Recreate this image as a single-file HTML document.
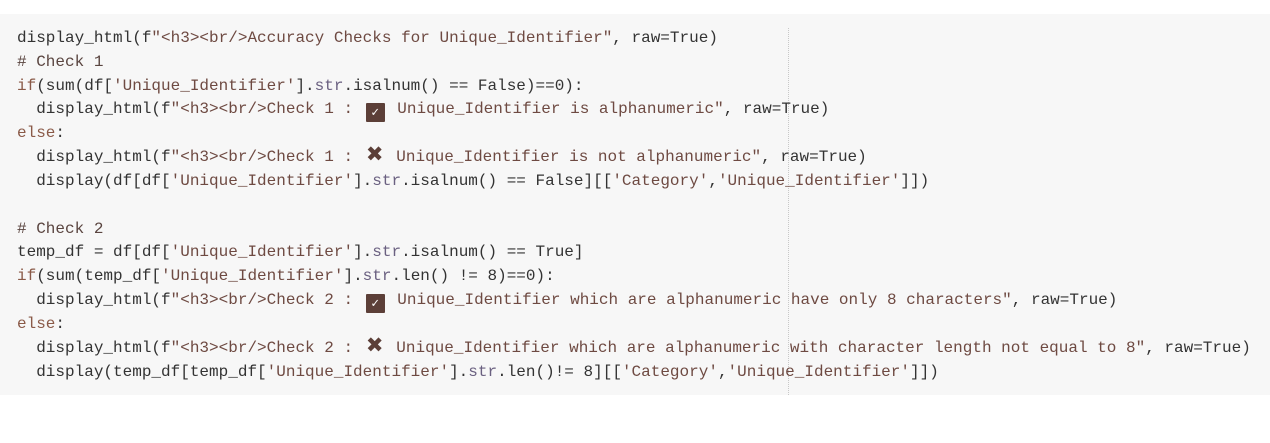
<!DOCTYPE html>
<html><head><meta charset="utf-8"><style>
body{margin:0;width:1270px;height:443px;background:#fff;overflow:hidden;position:relative}
.bg{position:absolute;left:0;top:14px;width:1270px;height:381px;background:#f7f7f7}
.vl{position:absolute;left:788px;top:28px;height:367px;border-left:1px dotted #c8c8c8}
pre{position:absolute;left:17px;top:27px;margin:0;font-family:"Liberation Mono","DejaVu Sans Mono",monospace;font-size:16px;line-height:23.8px;color:#333}
.s{color:#6e4a42}.k{color:#8a5a48}.c{color:#5a4540}.m{color:#6a6080}
.bx{display:inline-block;width:19px;height:19px;background:#5c3f38;color:#fff;font-size:13px;line-height:19px;text-align:center;vertical-align:-3px;border-radius:1px;margin:0 3px 0 3px}
.x{display:inline-block;width:24px;text-align:center;color:#5c3f38;font-weight:bold;font-family:"DejaVu Sans",sans-serif;font-size:21px;line-height:10px}
</style></head><body>
<div class="bg"></div><div class="vl"></div>
<pre>display_html(f<span class="s">"&lt;h3&gt;&lt;br/&gt;Accuracy Checks for Unique_Identifier"</span>, raw=True)
<span class="c"># Check 1</span>
<span class="k">if</span>(sum(df[<span class="s">'Unique_Identifier'</span>].<span class="m">str</span>.isalnum() == False)==0):
  display_html(f<span class="s">"&lt;h3&gt;&lt;br/&gt;Check 1 : <span class="bx">✓</span> Unique_Identifier is alphanumeric"</span>, raw=True)
<span class="k">else</span>:
  display_html(f<span class="s">"&lt;h3&gt;&lt;br/&gt;Check 1 : <span class="x">✖</span> Unique_Identifier is not alphanumeric"</span>, raw=True)
  display(df[df[<span class="s">'Unique_Identifier'</span>].<span class="m">str</span>.isalnum() == False][[<span class="s">'Category'</span>,<span class="s">'Unique_Identifier'</span>]])

<span class="c"># Check 2</span>
temp_df = df[df[<span class="s">'Unique_Identifier'</span>].<span class="m">str</span>.isalnum() == True]
<span class="k">if</span>(sum(temp_df[<span class="s">'Unique_Identifier'</span>].<span class="m">str</span>.len() != 8)==0):
  display_html(f<span class="s">"&lt;h3&gt;&lt;br/&gt;Check 2 : <span class="bx">✓</span> Unique_Identifier which are alphanumeric have only 8 characters"</span>, raw=True)
<span class="k">else</span>:
  display_html(f<span class="s">"&lt;h3&gt;&lt;br/&gt;Check 2 : <span class="x">✖</span> Unique_Identifier which are alphanumeric with character length not equal to 8"</span>, raw=True)
  display(temp_df[temp_df[<span class="s">'Unique_Identifier'</span>].<span class="m">str</span>.len()!= 8][[<span class="s">'Category'</span>,<span class="s">'Unique_Identifier'</span>]])</pre>
</body></html>
